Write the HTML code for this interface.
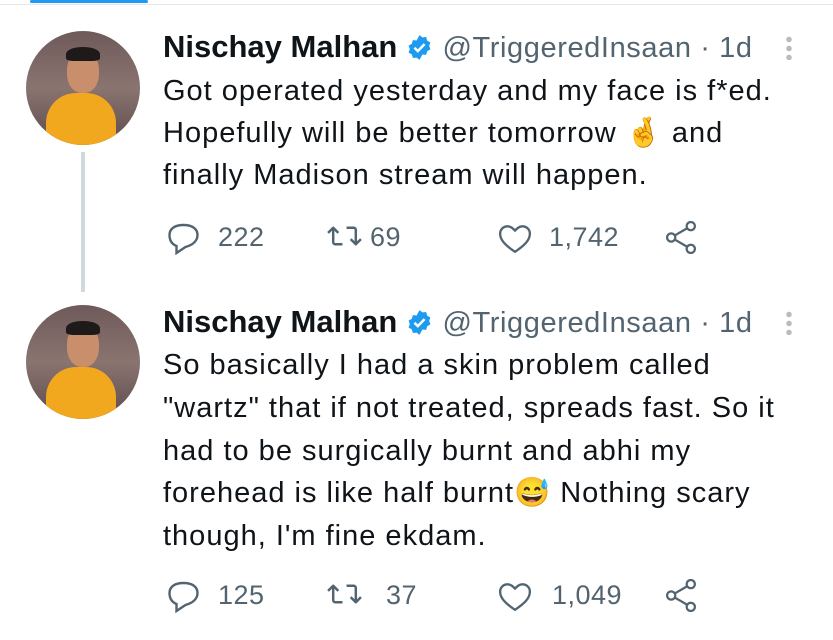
<!DOCTYPE html>
<html><head><meta charset="utf-8"><style>
body{margin:0;width:833px;height:640px;background:#fff;position:relative;overflow:hidden;font-family:"Liberation Sans",sans-serif;color:#0f1419}
.a{position:absolute}
.t{position:absolute;left:163px;font-size:29px;letter-spacing:1px;white-space:nowrap;line-height:42px}
.n{font-weight:bold;font-size:31px;letter-spacing:0}
.g{color:#536471}
.h{letter-spacing:0.6px}
.c{font-size:27px;letter-spacing:0.5px}
.av{position:absolute;width:114px;height:114px;border-radius:50%;overflow:hidden;background:linear-gradient(#6e5a5a,#8a7470 50%,#5d4b4b)}
</style></head><body>
<div class="a" style="left:30px;top:0;width:118px;height:3px;background:#1d9bf0;border-radius:2px"></div>
<div class="a" style="left:0;top:4px;width:833px;height:1px;background:#e6e6e6"></div>
<div class="a" style="left:81px;top:152px;width:4px;height:140px;background:#cfd9de"></div>

<div class="av" style="left:26px;top:31px">
<div class="a" style="left:20px;top:62px;width:70px;height:60px;border-radius:30px 30px 0 0;background:#f1a81f"></div>
<div class="a" style="left:41px;top:20px;width:32px;height:42px;border-radius:45%;background:#c98e6c"></div>
<div class="a" style="left:40px;top:16px;width:34px;height:14px;border-radius:50% 50% 20% 20%;background:#1f1a1a"></div>
</div>
<div class="av" style="left:26px;top:305px">
<div class="a" style="left:20px;top:62px;width:70px;height:60px;border-radius:30px 30px 0 0;background:#f1a81f"></div>
<div class="a" style="left:41px;top:20px;width:32px;height:42px;border-radius:45%;background:#c98e6c"></div>
<div class="a" style="left:40px;top:16px;width:34px;height:14px;border-radius:50% 50% 20% 20%;background:#1f1a1a"></div>
</div>

<svg width="0" height="0" style="position:absolute"><defs>
<g id="v"><path fill="#1d9bf0" d="M12 1l2.6 2 3.3-.3.9 3.2 2.9 1.6-1.1 3.1 1.1 3.1-2.9 1.6-.9 3.2-3.3-.3L12 23l-2.6-2-3.3.3-.9-3.2-2.9-1.6 1.1-3.1-1.1-3.1 2.9-1.6.9-3.2 3.3.3z"/><path d="M7.5 12.2l3 3 6-6.2" stroke="#fff" stroke-width="2.2" fill="none"/></g>
<g id="r" fill="none" stroke="#536471" stroke-width="2.4"><path d="M2 12C2 6 7 2 16 2s14 4 14 10c0 6-5 10-12 12L9 30v-7C4 21 2 17 2 12z"/></g>
<g id="rt" fill="none" stroke="#536471" stroke-width="2.4" stroke-linejoin="round"><path d="M2 10l5-5 5 5M7 5v14c0 1 1 2 2 2h7"/><path d="M34 16l-5 5-5-5M29 21V7c0-1-1-2-2-2h-7"/></g>
<g id="h" fill="none" stroke="#536471" stroke-width="2.2"><path d="M16 28C7 22 2 17 2 11c0-4 3-7 7-7 3 0 5 2 7 4 2-2 4-4 7-4 4 0 7 3 7 7 0 6-5 11-14 17z"/></g>
<g id="s" fill="none" stroke="#536471" stroke-width="2.2"><circle cx="25" cy="5" r="4"/><circle cx="6" cy="16" r="4"/><circle cx="25" cy="27" r="4"/><path d="M9.5 14l12-7M9.5 18l12 7"/></g>
</defs></svg>

<div class="t" style="top:26px"><span class="n">Nischay Malhan</span> <svg width="27" height="27" viewBox="0 0 24 24" style="vertical-align:-4px"><use href="#v"/></svg> <span class="g h">@TriggeredInsaan · 1d</span></div>
<div class="a" style="left:786px;top:35px;width:6px;height:25px;background:radial-gradient(circle,#bbb 2.5px,transparent 3px) 0 0/6px 9px"></div>
<div class="t" style="top:70px">Got operated yesterday and my face is f*ed.</div>
<div class="t" style="top:112px">Hopefully will be better tomorrow 🤞 and</div>
<div class="t" style="top:154px">finally Madison stream will happen.</div>

<svg class="a" style="left:167px;top:223px" width="33" height="32" viewBox="0 0 32 32"><use href="#r"/></svg>
<div class="t g c" style="left:218px;top:216px">222</div>
<svg class="a" style="left:326px;top:222px" width="37" height="28" viewBox="0 2 36 22"><use href="#rt"/></svg>
<div class="t g c" style="left:370px;top:216px">69</div>
<svg class="a" style="left:498px;top:222px" width="34" height="32" viewBox="0 0 32 30"><use href="#h"/></svg>
<div class="t g c" style="left:549px;top:216px">1,742</div>
<svg class="a" style="left:665px;top:221px" width="33" height="33" viewBox="0 0 32 32"><use href="#s"/></svg>

<div class="t" style="top:301px"><span class="n">Nischay Malhan</span> <svg width="27" height="27" viewBox="0 0 24 24" style="vertical-align:-4px"><use href="#v"/></svg> <span class="g h">@TriggeredInsaan · 1d</span></div>
<div class="a" style="left:786px;top:310px;width:6px;height:25px;background:radial-gradient(circle,#bbb 2.5px,transparent 3px) 0 0/6px 9px"></div>
<div class="t" style="top:344px">So basically I had a skin problem called</div>
<div class="t" style="top:387px">"wartz" that if not treated, spreads fast. So it</div>
<div class="t" style="top:430px">had to be surgically burnt and abhi my</div>
<div class="t" style="top:472px">forehead is like half burnt😅 Nothing scary</div>
<div class="t" style="top:515px">though, I'm fine ekdam.</div>

<svg class="a" style="left:167px;top:581px" width="33" height="32" viewBox="0 0 32 32"><use href="#r"/></svg>
<div class="t g c" style="left:218px;top:574px">125</div>
<svg class="a" style="left:326px;top:580px" width="37" height="28" viewBox="0 2 36 22"><use href="#rt"/></svg>
<div class="t g c" style="left:386px;top:574px">37</div>
<svg class="a" style="left:498px;top:580px" width="34" height="32" viewBox="0 0 32 30"><use href="#h"/></svg>
<div class="t g c" style="left:552px;top:574px">1,049</div>
<svg class="a" style="left:665px;top:579px" width="33" height="33" viewBox="0 0 32 32"><use href="#s"/></svg>
</body></html>
